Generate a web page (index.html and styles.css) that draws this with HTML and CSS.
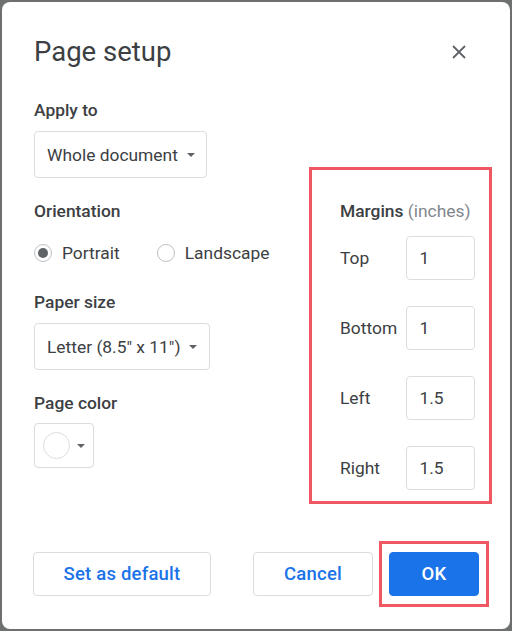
FILE: index.html
```html
<!DOCTYPE html>
<html>
<head>
<meta charset="utf-8">
<link rel="stylesheet" href="styles.css">
</head>
<body>
<div class="dialog">
  <div class="header">
    <h1 class="title">Page setup</h1>
    <svg class="close" width="14" height="14" viewBox="0 0 14 14"><path d="M1 1L13 13M13 1L1 13" stroke="#5f6368" stroke-width="1.8" fill="none"/></svg>
  </div>
  <div class="main">
    <div class="left">
      <div class="label">Apply to</div>
      <div class="select sel-apply"><span>Whole document</span><span class="caret"></span></div>
      <div class="label label-orient">Orientation</div>
      <div class="radios">
        <div class="radio"><span class="circle on"></span><span>Portrait</span></div>
        <div class="radio"><span class="circle"></span><span>Landscape</span></div>
      </div>
      <div class="label label-paper">Paper size</div>
      <div class="select sel-paper"><span>Letter (8.5" x 11")</span><span class="caret"></span></div>
      <div class="label label-color">Page color</div>
      <div class="color"><span class="swatch"></span><span class="caret"></span></div>
    </div>
    <div class="margins">
      <div class="mtitle">Margins <span class="unit">(inches)</span></div>
      <div class="mrow"><span class="mlabel">Top</span><span class="input">1</span></div>
      <div class="mrow"><span class="mlabel">Bottom</span><span class="input">1</span></div>
      <div class="mrow"><span class="mlabel">Left</span><span class="input">1.5</span></div>
      <div class="mrow"><span class="mlabel">Right</span><span class="input">1.5</span></div>
    </div>
  </div>
  <div class="footer">
    <button class="btn btn-default">Set as default</button>
    <button class="btn btn-cancel">Cancel</button>
    <div class="okwrap"><button class="btn btn-ok">OK</button></div>
  </div>
</div>
</body>
</html>
```
FILE: styles.css
```css
html, body {
  margin: 0;
  padding: 0;
  background: #6d706f;
}
body {
  width: 512px;
  height: 631px;
  padding: 2px 2px 2px 2px;
  box-sizing: border-box;
  font-family: Roboto, "Liberation Sans", sans-serif;
  color: #3c4043;
}
.dialog {
  background: #fff;
  width: 508px;
  height: 627px;
  border-radius: 8px;
  box-sizing: border-box;
  padding: 0 21px 0 32px;
  display: flex;
  flex-direction: column;
}
.header {
  display: flex;
  align-items: center;
  justify-content: space-between;
  height: 98px;
}
.title {
  margin: 0;
  font-weight: 400;
  font-size: 27.5px;
  line-height: 32px;
  color: #3c4043;
  margin-top: 2px;
}
.close {
  margin-right: 23px;
  margin-top: 2px;
}
.main {
  display: flex;
  justify-content: space-between;
  margin-right: -3px;
}
.left {
  display: flex;
  flex-direction: column;
  align-items: flex-start;
}
.label {
  font-size: 17.4px;
  font-weight: 500;
  line-height: 20px;
  color: #3c4043;
}
.select {
  margin-top: 11px;
  height: 47px;
  box-sizing: border-box;
  border: 1px solid #dadce0;
  border-radius: 4px;
  display: flex;
  align-items: center;
  padding: 0 10px 0 12px;
  font-size: 17.4px;
  color: #3c4043;
}
.sel-apply { width: 173px; }
.sel-paper { width: 176px; }
.caret {
  width: 0;
  height: 0;
  border-left: 4.5px solid transparent;
  border-right: 4.5px solid transparent;
  border-top: 4.5px solid #5f6368;
  margin-left: 9px;
}
.label-orient { margin-top: 23px; }
.radios {
  margin-top: 20px;
  display: flex;
  height: 24px;
  align-items: center;
  font-size: 17.4px;
}
.radio {
  display: flex;
  align-items: center;
}
.radio + .radio { margin-left: 37px; }
.circle {
  width: 18px;
  height: 18px;
  box-sizing: border-box;
  border: 1px solid #bdc1c6;
  border-radius: 50%;
  margin-right: 10px;
  display: flex;
  align-items: center;
  justify-content: center;
}
.circle.on::after {
  content: "";
  width: 10px;
  height: 10px;
  border-radius: 50%;
  background: #5f6368;
}
.label-paper { margin-top: 27px; }
.label-color { margin-top: 23px; }
.color {
  margin-top: 10px;
  width: 60px;
  height: 45px;
  box-sizing: border-box;
  border: 1px solid #dadce0;
  border-radius: 4px;
  display: flex;
  align-items: center;
  padding-left: 8px;
}
.swatch {
  width: 27px;
  height: 27px;
  box-sizing: border-box;
  border: 1px solid #dadce0;
  border-radius: 50%;
}
.color .caret { margin-left: 7px; }
.margins {
  margin-top: 67px;
  width: 183px;
  height: 337px;
  box-sizing: border-box;
  border: 3px solid #ef5862;
  padding: 31px 14px 0 28px;
}
.mtitle {
  font-size: 17.4px;
  font-weight: 500;
  line-height: 20px;
}
.unit {
  font-weight: 400;
  color: #80868b;
}
.mrow {
  display: flex;
  align-items: center;
  margin-top: 26px;
  font-size: 17.4px;
}
.mtitle + .mrow { margin-top: 15px; }
.mlabel { width: 67px; }
.input {
  width: 69px;
  height: 44px;
  box-sizing: border-box;
  border: 1px solid #dadce0;
  border-radius: 4px;
  display: flex;
  align-items: center;
  padding-left: 12px;
}
.footer {
  margin-top: 37px;
  display: flex;
  align-items: center;
}
.btn {
  height: 44px;
  box-sizing: border-box;
  border: 1px solid #dadce0;
  border-radius: 4px;
  background: #fff;
  color: #1a73e8;
  font-family: Roboto, "Liberation Sans", sans-serif;
  font-size: 18.5px;
  font-weight: 500;
  letter-spacing: 0.2px;
  padding: 0;
}
.btn-default {
  width: 178px;
  margin-left: -1px;
}
.btn-cancel {
  width: 120px;
  margin-left: auto;
}
.okwrap {
  margin-left: 6px;
  border: 3px solid #ef5862;
  padding: 8px 7px;
}
.btn-ok {
  display: block;
  width: 90px;
  background: #1a73e8;
  border-color: #1a73e8;
  color: #fff;
}
```
